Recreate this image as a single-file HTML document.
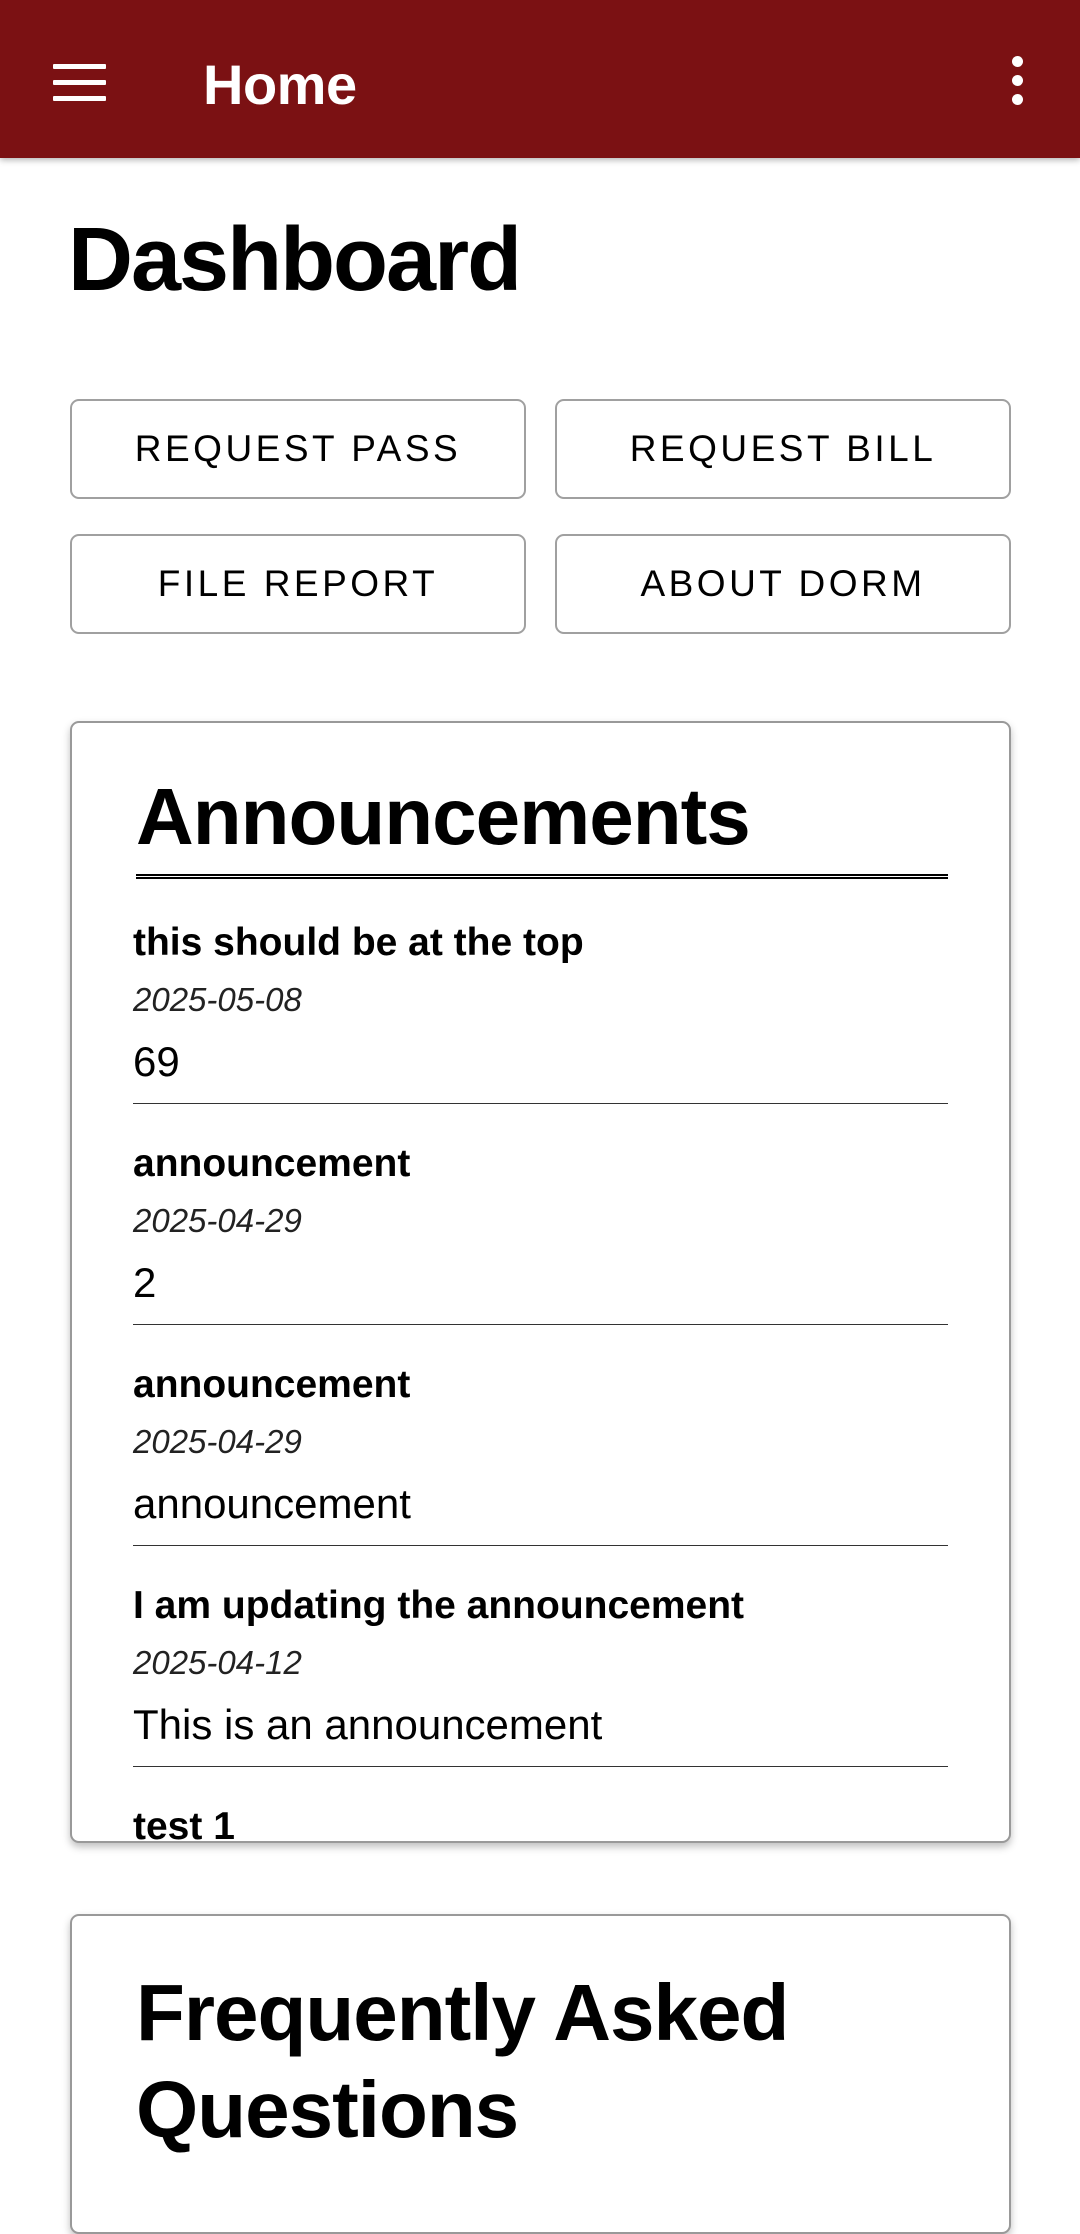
<!DOCTYPE html>
<html><head><meta charset="utf-8"><style>
*{margin:0;padding:0;box-sizing:border-box}
body{width:1080px;height:2180px;overflow:hidden;background:#fff;font-family:"Liberation Sans",sans-serif;color:#000;position:relative}
.bar{position:absolute;left:0;top:0;width:1080px;height:158px;background:#7b1113;box-shadow:0 2px 6px rgba(0,0,0,.3)}
.ham{position:absolute;left:53px;top:64px;width:53px}
.ham div{height:5px;background:#fff;margin-bottom:11px;border-radius:1px}
.home{position:absolute;left:203px;top:52px;color:#fff;font-size:56px;font-weight:bold;letter-spacing:-0.5px}
.dots{position:absolute;left:1012px;top:56px}
.dots div{width:11px;height:11px;border-radius:50%;background:#fff;margin-bottom:8px}
h1{position:absolute;left:68px;top:215px;font-size:90px;font-weight:bold;line-height:1;letter-spacing:-2px}
.btn{position:absolute;width:456px;height:100px;border:2.5px solid #a0a0a0;border-radius:9px;display:flex;align-items:center;justify-content:center;font-size:37px;letter-spacing:3.5px}
.card{position:absolute;left:70px;width:941px;border:2.5px solid #999;border-radius:9px;box-shadow:0 4px 8px rgba(0,0,0,.25);overflow:hidden;background:#fff}
.at{position:absolute;left:64px;top:54px;font-size:80px;font-weight:bold;line-height:1;letter-spacing:-1px}
.ul{position:absolute;left:64px;top:151px;width:812px;height:5px;border-top:2px solid #000;border-bottom:2px solid #000}
.item{position:absolute;left:61px;width:815px;height:221px;border-bottom:1.5px solid #333}
.t{position:absolute;top:38px;font-size:39px;font-weight:bold}
.d{position:absolute;top:98px;font-size:33px;font-style:italic;color:#222}
.b{position:absolute;top:155px;font-size:42px}
.fq{position:absolute;left:64px;top:48px;font-size:80px;font-weight:bold;line-height:97px;letter-spacing:-1px}
</style></head><body>
<div class="bar"><div class="ham"><div></div><div></div><div></div></div><div class="home">Home</div><div class="dots"><div></div><div></div><div></div></div></div>
<h1>Dashboard</h1>
<div class="btn" style="left:70px;top:399px">REQUEST PASS</div>
<div class="btn" style="left:555px;top:399px">REQUEST BILL</div>
<div class="btn" style="left:70px;top:534px">FILE REPORT</div>
<div class="btn" style="left:555px;top:534px">ABOUT DORM</div>
<div class="card" style="top:721px;height:1122px">
<div class="at">Announcements</div><div class="ul"></div>
<div class="item" style="top:160px"><div class="t">this should be at the top</div><div class="d">2025-05-08</div><div class="b">69</div></div>
<div class="item" style="top:381px"><div class="t">announcement</div><div class="d">2025-04-29</div><div class="b">2</div></div>
<div class="item" style="top:602px"><div class="t">announcement</div><div class="d">2025-04-29</div><div class="b">announcement</div></div>
<div class="item" style="top:823px"><div class="t">I am updating the announcement</div><div class="d">2025-04-12</div><div class="b">This is an announcement</div></div>
<div class="item" style="top:1044px;border:none"><div class="t">test 1</div></div>
</div>
<div class="card" style="top:1914px;height:320px"><div class="fq">Frequently Asked<br>Questions</div></div>
</body></html>
